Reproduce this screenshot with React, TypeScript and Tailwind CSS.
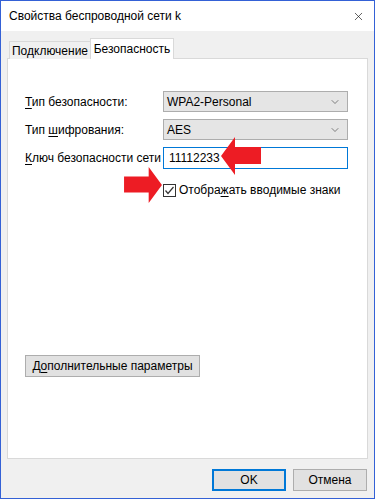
import { ChevronDown, X } from 'lucide-react'

const font = { fontFamily: '"Liberation Sans", Arial, sans-serif' }

/**
 * Accelerator letter: underlined character inside a label
 */
function Acc({ children }: { children: string }) {
  return <span className="underline underline-offset-2">{children}</span>
}

function Select({ value }: { value: string }) {
  return (
    <div className="flex h-[21px] w-[185px] items-center justify-between border border-[#adadad] bg-[#e5e5e5] pr-[6px] pl-[3px] text-[12px] text-black">
      <span>{value}</span>
      <ChevronDown className="size-[12px] text-[#444]" strokeWidth={1.3} />
    </div>
  )
}

function RedArrow({ dir, className }: { dir: 'left' | 'right'; className: string }) {
  // left-pointing arrow by default, mirrored for right
  return (
    <svg
      viewBox="0 0 40 38"
      className={className}
      style={dir === 'right' ? { transform: 'scaleX(-1)' } : undefined}
    >
      <polygon points="0,19 14,0 14,10 40,10 40,27 14,27 14,38" fill="#ed1c24" />
    </svg>
  )
}

export default function App() {
  return (
    <div
      className="flex h-[499px] w-[375px] flex-col border border-[#3461d6] bg-[#f0f0f0] text-[12px] whitespace-nowrap text-black"
      style={font}
    >
      {/* title bar */}
      <div className="flex h-[30px] flex-none items-center justify-between bg-white pr-[9px] pl-[8px]">
        <span className="text-[12px] leading-none">Свойства беспроводной сети k</span>
        <X className="size-[13px] text-[#111]" strokeWidth={1.2} />
      </div>

      <div className="flex flex-1 flex-col px-[6px] pt-[7px]">
        {/* tabs */}
        <div className="relative z-10 -mb-px flex h-[21px] items-end pl-[2px]">
          <div className="flex h-[18px] w-[82px] items-center justify-center border border-b-0 border-[#d9d9d9] bg-[#f0f0f0] pt-[1px]">
            Подключение
          </div>
          <div className="-ml-px flex h-[21px] w-[84px] items-center justify-center border border-b-0 border-[#d9d9d9] bg-white">
            Безопасность
          </div>
        </div>

        {/* panel */}
        <div className="relative flex h-[401px] flex-none flex-col border border-[#d9d9d9] bg-white pt-[32px] pl-[17px]">
          <div className="flex items-center">
            <span className="w-[138px]">
              <Acc>Т</Acc>ип безопасности:
            </span>
            <Select value="WPA2-Personal" />
          </div>
          <div className="mt-[7px] flex items-center">
            <span className="w-[138px]">
              Тип <Acc>ш</Acc>ифрования:
            </span>
            <Select value="AES" />
          </div>
          <div className="mt-[7px] flex items-center">
            <span className="w-[138px]">
              <Acc>К</Acc>люч безопасности сети
            </span>
            <div className="flex h-[22px] w-[185px] items-center border border-[#0078d7] pl-[5px]">
              11112233
            </div>
          </div>
          <div className="mt-[12px] flex items-center pl-[138px]">
            <div className="flex size-[13px] items-center justify-center border border-[#333]">
              <svg viewBox="0 0 11 11" className="size-[11px]">
                <polyline points="1.5,5.5 4,8.5 9.5,2" fill="none" stroke="#333" strokeWidth="1.2" />
              </svg>
            </div>
            <span className="ml-[3px]">
              Отобра<Acc>ж</Acc>ать вводимые знаки
            </span>
          </div>

          <button className="mt-[156px] flex h-[22px] w-[175px] items-center justify-center border border-[#adadad] bg-[#e1e1e1]">
            Д<Acc>о</Acc>полнительные параметры
          </button>

          <RedArrow dir="left" className="absolute top-[78px] left-[213px] h-[38px] w-[40px]" />
          <RedArrow dir="right" className="absolute top-[108px] left-[116px] h-[36px] w-[38px]" />
        </div>

        {/* bottom buttons */}
        <div className="mt-[10px] flex justify-end gap-[7px] pr-[1px]">
          <button className="flex h-[22px] w-[74px] items-center justify-center border-2 border-[#0078d7] bg-[#e1e1e1]">
            OK
          </button>
          <button className="flex h-[22px] w-[74px] items-center justify-center border border-[#adadad] bg-[#e1e1e1]">
            Отмена
          </button>
        </div>
      </div>
    </div>
  )
}
